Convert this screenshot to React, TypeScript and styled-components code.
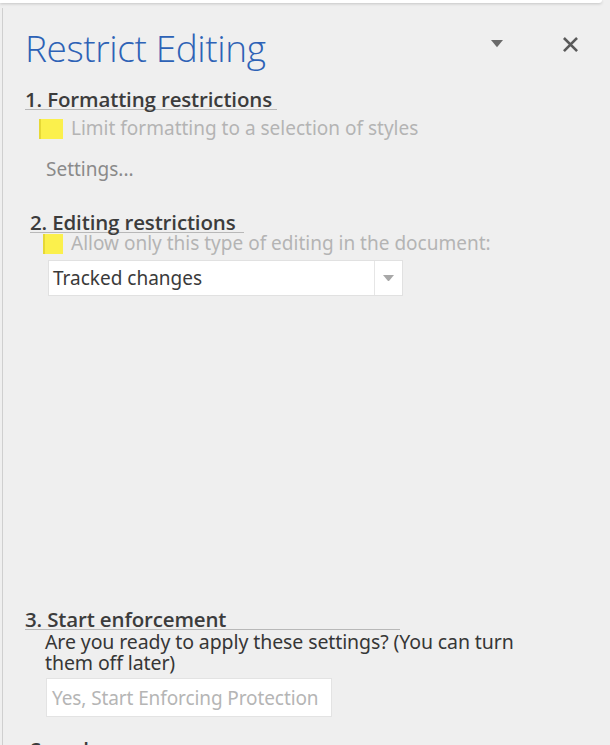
import React from "react";
import styled, { createGlobalStyle } from "styled-components";

const GlobalStyle = createGlobalStyle`
  html, body {
    margin: 0;
    padding: 0;
    background: #efefef;
  }
  body {
    font-family: "Noto Sans", "Open Sans", sans-serif;
    overflow: hidden;
  }
`;

const Page = styled.div`
  width: 610px;
  height: 745px;
  overflow: hidden;
  background: #efefef;
  display: flex;
  flex-direction: column;
`;

const DocEdge = styled.div`
  height: 3px;
  width: 602px;
  background: #ffffff;
  border-bottom-right-radius: 6px;
  box-shadow: 0 1px 3px rgba(0, 0, 0, 0.18);
  flex: none;
`;

const Pane = styled.div`
  flex: 1;
  margin: 5px 0 0 2px;
  border-left: 1px solid #cfcfcf;
  padding: 0 0 0 22px;
  display: flex;
  flex-direction: column;
`;

const Header = styled.div`
  display: flex;
  align-items: flex-start;
  padding-top: 20px;
`;

const Title = styled.h1`
  margin: 0;
  flex: 1;
  font-family: "Open Sans", "Noto Sans", sans-serif;
  font-weight: 300;
  font-size: 37px;
  letter-spacing: -0.4px;
  color: #2d62b6;
  line-height: 40px;
`;

const IconButton = styled.button<{ $gap: number }>`
  border: none;
  background: none;
  padding: 0;
  margin-top: 6px;
  width: 20px;
  height: 20px;
  display: flex;
  align-items: center;
  justify-content: center;
  margin-right: ${(p) => p.$gap}px;
`;

const Section = styled.section<{ $indent?: number; $top: number }>`
  display: flex;
  flex-direction: column;
  padding-left: ${(p) => p.$indent ?? 0}px;
  margin-top: ${(p) => p.$top}px;
`;

const Heading = styled.h2<{ $rule?: number }>`
  margin: 0;
  font-family: "Open Sans", "Noto Sans", sans-serif;
  font-weight: 600;
  font-size: 20.5px;
  letter-spacing: -0.15px;
  color: #3c3c3c;
  line-height: 20px;
  white-space: nowrap;
  width: ${(p) => (p.$rule ? `${p.$rule}px` : "auto")};
  border-bottom: ${(p) => (p.$rule ? "1px solid #b8b8b8" : "none")};
`;

const CheckRow = styled.label<{ $indent: number; $top: number }>`
  display: flex;
  align-items: center;
  gap: 8px;
  margin-top: ${(p) => p.$top}px;
  padding-left: ${(p) => p.$indent}px;
  font-size: 19px;
  line-height: 21px;
  color: #b4b4b4;
  height: 21px;
  white-space: nowrap;
`;

const Box = styled.span<{ $w: number }>`
  width: ${(p) => p.$w}px;
  height: 20px;
  background: #fbf04c;
  border-left: 2px solid #e6d835;
  box-sizing: border-box;
  flex: none;
`;

const LinkText = styled.div`
  font-size: 19px;
  line-height: 26px;
  color: #8a8a8a;
  padding-left: 21px;
  margin-top: 17px;
`;

const Select = styled.div`
  display: flex;
  align-items: stretch;
  width: 355px;
  height: 36px;
  margin: 6px 0 0 18px;
  background: #ffffff;
  border: 1px solid #e1e1e1;
  box-sizing: border-box;
`;

const SelectValue = styled.div`
  flex: 1;
  display: flex;
  align-items: center;
  padding-left: 4px;
  font-size: 19px;
  color: #3a3a3a;
`;

const SelectArrow = styled.div`
  width: 27px;
  border-left: 1px solid #e6e6e6;
  display: flex;
  align-items: center;
  justify-content: center;
`;

const Body = styled.p`
  margin: 1px 0 0 20px;
  width: 520px;
  font-size: 19.5px;
  line-height: 21px;
  color: #363636;
  letter-spacing: -0.1px;
`;

const ActionButton = styled.button`
  margin: 5px 0 0 21px;
  align-self: flex-start;
  width: 286px;
  height: 39px;
  background: #ffffff;
  border: 1px solid #e3e3e3;
  font-family: "Noto Sans", "Open Sans", sans-serif;
  font-size: 19px;
  color: #b5b5b5;
  text-align: left;
  padding: 0 0 0 5px;
  letter-spacing: -0.1px;
  white-space: nowrap;
`;

const Caret = ({ size, color }: { size: number; color: string }) => (
  <svg width={size} height={size * 0.6} viewBox="0 0 10 6">
    <path d="M0 0 L10 0 L5 6 Z" fill={color} />
  </svg>
);

const CloseIcon = () => (
  <svg width="15" height="15" viewBox="0 0 16 16">
    <path d="M2 2 L14 14 M14 2 L2 14" stroke="#5a5a5a" strokeWidth="2.8" strokeLinecap="square" />
  </svg>
);

export default function App() {
  return (
    <Page>
      <GlobalStyle />
      <DocEdge />
      <Pane>
        <Header>
          <Title>Restrict Editing</Title>
          <IconButton $gap={53}>
            <Caret size={12} color="#6a6a6a" />
          </IconButton>
          <IconButton $gap={30}>
            <CloseIcon />
          </IconButton>
        </Header>

        <Section $top={21}>
          <Heading $rule={252}>1. Formatting restrictions</Heading>
          <CheckRow $indent={14} $top={8}>
            <Box $w={24} />
            Limit formatting to a selection of styles
          </CheckRow>
          <LinkText>Settings...</LinkText>
        </Section>

        <Section $indent={5} $top={30}>
          <Heading $rule={214}>2. Editing restrictions</Heading>
          <CheckRow $indent={13} $top={0}>
            <Box $w={20} />
            Allow only this type of editing in the document:
          </CheckRow>
          <Select>
            <SelectValue>Tracked changes</SelectValue>
            <SelectArrow>
              <Caret size={11} color="#a8a8a8" />
            </SelectArrow>
          </Select>
        </Section>

        <Section $top={313}>
          <Heading $rule={375}>3. Start enforcement</Heading>
          <Body>
            Are you ready to apply these settings? (You can turn them off later)
          </Body>
          <ActionButton>Yes, Start Enforcing Protection</ActionButton>
        </Section>

        <Section $indent={5} $top={22}>
          <Heading>Search</Heading>
        </Section>
      </Pane>
    </Page>
  );
}
